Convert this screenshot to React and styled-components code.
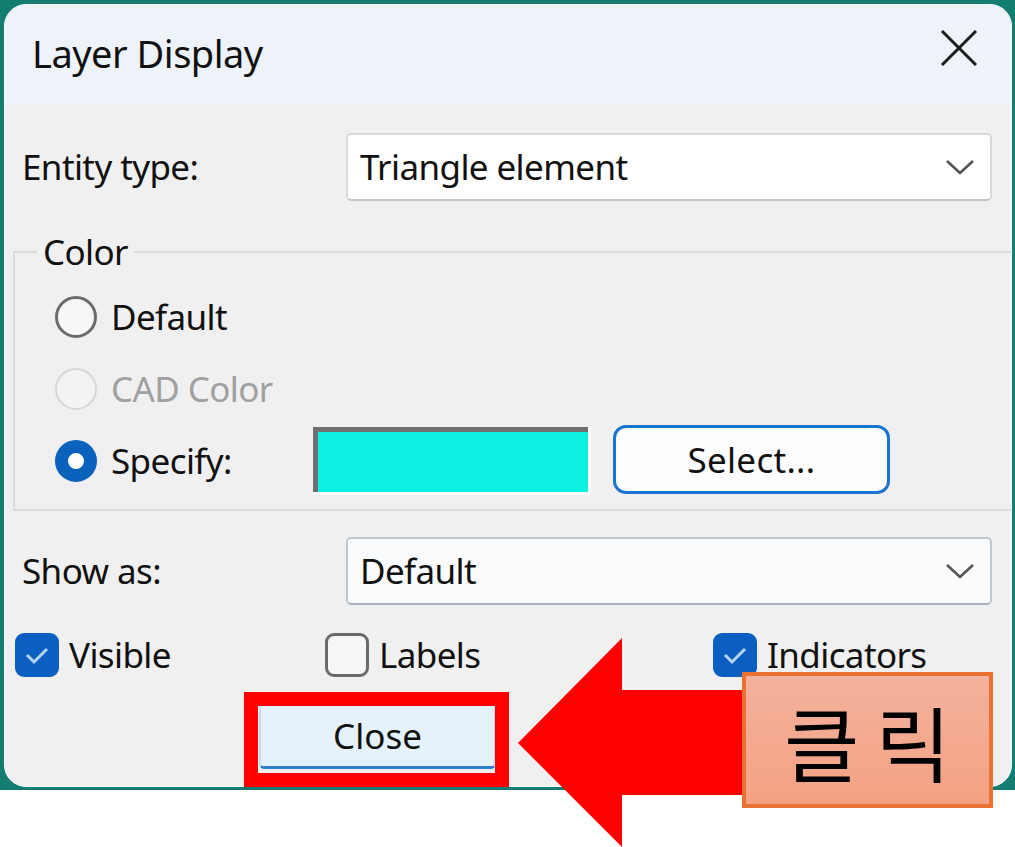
import React from 'react'
import styled, { createGlobalStyle } from 'styled-components';

const Global = createGlobalStyle`
    body {
        margin: 0;
        background: #ffffff;
        font-family: "Noto Sans", "Open Sans", sans-serif;
    }
`;

const Stage = styled.div`
    position: relative;
    width: 1015px;
    height: 847px;
    overflow: hidden;
    background: #ffffff;
`;

const Desktop = styled.div`
    height: 790px;
    background: #137d72;
    padding: 4px 3px 0 4px;
    box-sizing: border-box;
`;

const Dialog = styled.div`
    width: 1008px;
    height: 783px;
    box-sizing: border-box;
    border: 1px solid #fbfbfb;
    border-radius: 22px;
    background: #f0f0f0;
    overflow: hidden;
    display: flex;
    flex-direction: column;
`;

const TitleBar = styled.div`
    height: 100px;
    background: #eef2f9;
    display: flex;
    align-items: center;
    justify-content: space-between;
    padding: 0 32px 0 27px;
    flex-shrink: 0;
`;

const Title = styled.div`
    font-size: 38px;
    color: #111;
    letter-spacing: -0.5px;
    margin-top: -4px;
`;

const CloseX = styled.svg`
    width: 40px;
    height: 40px;
    margin-top: -14px;
`;

const Body = styled.div`
    display: flex;
    flex-direction: column;
    padding: 28px 0 0 0;
`;

const FieldRow = styled.div`
    display: grid;
    grid-template-columns: 324px 646px;
    align-items: center;
    padding-left: 17px;
    margin-top: ${p => p.$top || 0}px;
`;

const Label = styled.div`
    font-size: 35px;
    line-height: 44px;
    color: ${p => p.$disabled ? '#a0a0a0' : '#111'};
    letter-spacing: -0.6px;
    white-space: nowrap;
`;

const Combo = styled.div`
    height: 68px;
    box-sizing: border-box;
    background: ${p => p.$tint ? '#fafbfc' : '#ffffff'};
    border: 2px solid ${p => p.$tint ? '#bfc7d0' : '#dadada'};
    border-bottom-color: ${p => p.$tint ? '#a7b0bb' : '#c6c6c6'};
    border-radius: 5px;
    display: flex;
    align-items: center;
    justify-content: space-between;
    padding: 0 14px 0 12px;
`;

const Chevron = styled.svg`
    width: 32px;
    height: 18px;
`;

const Group = styled.fieldset`
    margin: 32px -6px 0 8px;
    border: 2px solid #dcdcdc;
    padding: 10px 0 12px 0;
    min-width: 0;
`;

const Legend = styled.legend`
    font-size: 35px;
    color: #111;
    letter-spacing: -0.6px;
    padding: 0 6px;
    margin-left: 22px;
    line-height: 38px;
`;

const RadioRow = styled.div`
    display: flex;
    align-items: center;
    height: 72px;
    padding-left: 40px;
`;

const RadioCell = styled.div`
    display: flex;
    align-items: center;
    gap: 14px;
    width: 258px;
`;

const Radio = styled.span`
    width: 42px;
    height: 42px;
    box-sizing: border-box;
    border-radius: 50%;
    flex-shrink: 0;
    ${p => p.$checked
        ? 'border: 13px solid #0a62bd; background: #ffffff;'
        : p.$disabled
            ? 'border: 2px solid #d6d6d6; background: #f3f3f3;'
            : 'border: 3px solid #6a6a6a; background: #f7f7f7;'}
`;

const Swatch = styled.div`
    width: 278px;
    height: 68px;
    box-sizing: border-box;
    border: 3px solid #fafafa;
    border-left-width: 0;
    border-top-width: 0;
    background: #0cf0e3;
    box-shadow: inset 5px 5px 0 #6f6f6f;
`;

const SelectButton = styled.div`
    width: 277px;
    height: 69px;
    box-sizing: border-box;
    margin-left: 22px;
    margin-top: -4px;
    background: #fdfdfd;
    border: 3px solid #1b74d0;
    border-radius: 13px;
    display: flex;
    align-items: center;
    justify-content: center;
    font-size: 35px;
    color: #111;
    letter-spacing: 0.3px;
`;

const CheckRow = styled.div`
    display: grid;
    grid-template-columns: 310px 388px 1fr;
    align-items: center;
    padding-left: 10px;
    margin-top: 28px;
    height: 44px;
`;

const CheckItem = styled.div`
    display: flex;
    align-items: center;
    gap: 10px;
`;

const Box = styled.span`
    width: 44px;
    height: 44px;
    box-sizing: border-box;
    border-radius: 9px;
    flex-shrink: 0;
    display: flex;
    align-items: center;
    justify-content: center;
    ${p => p.$checked
        ? 'background: #0a5fc0; border: 2px solid #0a5fc0;'
        : 'background: #f6f6f6; border: 3px solid #6a6a6a;'}
`;

const Footer = styled.div`
    display: flex;
    padding-left: 254px;
    margin-top: 26px;
`;

const CloseButton = styled.div`
    width: 237px;
    height: 66px;
    box-sizing: border-box;
    background: #e5f1fb;
    border: 2px solid #c9dcee;
    border-bottom: 3px solid #2f7fcf;
    border-radius: 5px;
    display: flex;
    align-items: center;
    justify-content: center;
    font-size: 35px;
    color: #111;
`;

const Highlight = styled.div`
    position: absolute;
    left: 244px;
    top: 692px;
    width: 265px;
    height: 95px;
    box-sizing: border-box;
    border: 14px solid #ff0000;
`;

const Arrow = styled.svg`
    position: absolute;
    left: 518px;
    top: 638px;
    width: 226px;
    height: 209px;
`;

const Callout = styled.div`
    position: absolute;
    left: 742px;
    top: 672px;
    width: 251px;
    height: 136px;
    box-sizing: border-box;
    border: 4px solid #e97132;
    background: linear-gradient(#f4b19d, #f4a283);
    display: flex;
    align-items: center;
    justify-content: center;
    font-family: "Noto Sans CJK KR", "Noto Sans", sans-serif;
    font-size: 82px;
    color: #000;
    letter-spacing: 16px;
    padding-left: 16px;
`;

const DownChevron = () => (
    <Chevron viewBox="0 0 32 18">
        <path d="M3 3 L16 15 L29 3" fill="none" stroke="#555" strokeWidth="2.6" />
    </Chevron>
);

const Tick = () => (
    <svg width="30" height="24" viewBox="0 0 30 24">
        <path d="M5 12 L12 19 L25 6" fill="none" stroke="#b8d3f0" strokeWidth="3" />
    </svg>
);

const App = () => {
  return (
    <Stage>
        <Global/>
        <Desktop>
            <Dialog>
                <TitleBar>
                    <Title>Layer Display</Title>
                    <CloseX viewBox="0 0 40 40">
                        <path d="M3 3 L37 37 M37 3 L3 37" stroke="#1a1a1a" strokeWidth="3" />
                    </CloseX>
                </TitleBar>
                <Body>
                    <FieldRow>
                        <Label>Entity type:</Label>
                        <Combo>
                            <Label>Triangle element</Label>
                            <DownChevron/>
                        </Combo>
                    </FieldRow>
                    <Group>
                        <Legend>Color</Legend>
                        <RadioRow>
                            <RadioCell>
                                <Radio/>
                                <Label>Default</Label>
                            </RadioCell>
                        </RadioRow>
                        <RadioRow>
                            <RadioCell>
                                <Radio $disabled/>
                                <Label $disabled>CAD Color</Label>
                            </RadioCell>
                        </RadioRow>
                        <RadioRow>
                            <RadioCell>
                                <Radio $checked/>
                                <Label>Specify:</Label>
                            </RadioCell>
                            <Swatch/>
                            <SelectButton>Select...</SelectButton>
                        </RadioRow>
                    </Group>
                    <FieldRow $top={26}>
                        <Label>Show as:</Label>
                        <Combo $tint>
                            <Label>Default</Label>
                            <DownChevron/>
                        </Combo>
                    </FieldRow>
                    <CheckRow>
                        <CheckItem>
                            <Box $checked><Tick/></Box>
                            <Label>Visible</Label>
                        </CheckItem>
                        <CheckItem>
                            <Box/>
                            <Label>Labels</Label>
                        </CheckItem>
                        <CheckItem>
                            <Box $checked><Tick/></Box>
                            <Label>Indicators</Label>
                        </CheckItem>
                    </CheckRow>
                    <Footer>
                        <CloseButton>Close</CloseButton>
                    </Footer>
                </Body>
            </Dialog>
        </Desktop>
        <Highlight/>
        <Arrow viewBox="0 0 226 209">
            <polygon points="0,105 104,0 104,52 226,52 226,157 104,157 104,209" fill="#ff0000" />
        </Arrow>
        <Callout>클릭</Callout>
    </Stage>
  )
}

export default App
